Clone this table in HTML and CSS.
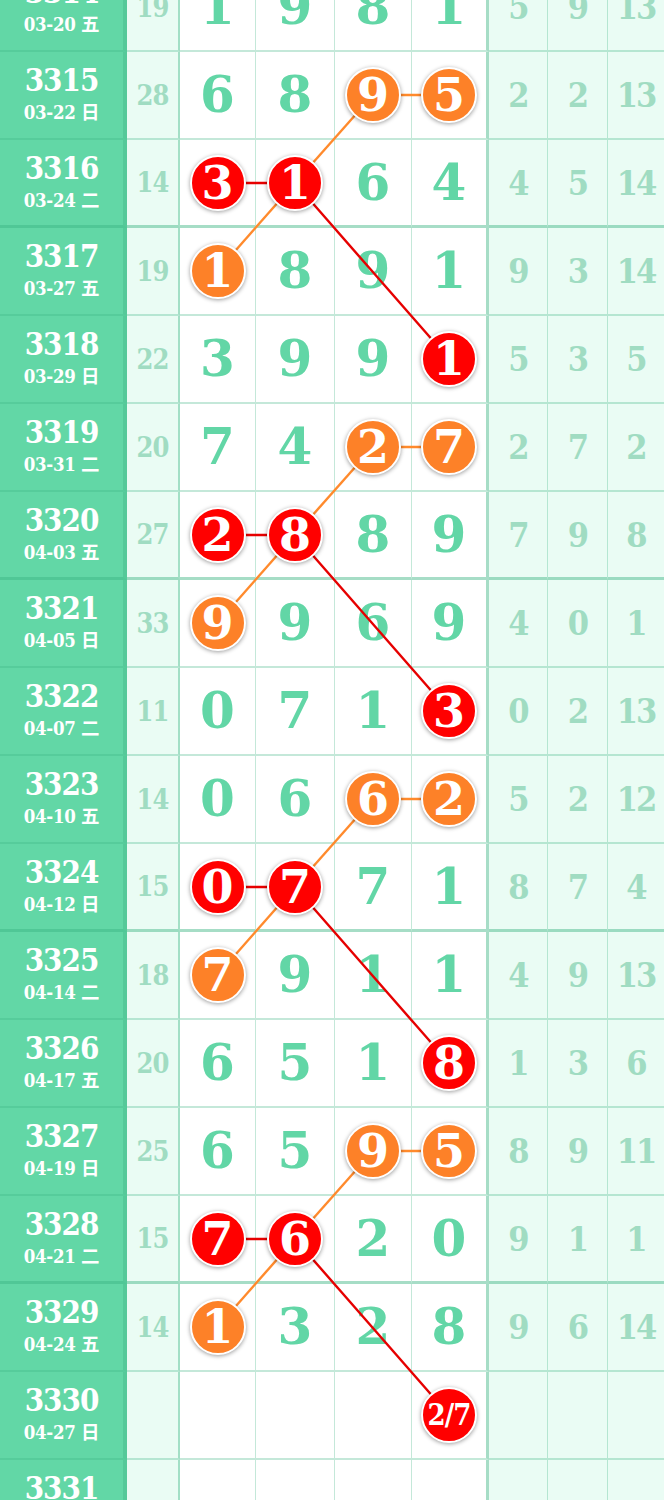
FILE: index.html
```html
<!DOCTYPE html>
<html lang="zh-CN">
<head>
    <meta charset="UTF-8">
    <meta name="viewport" content="width=device-width, initial-scale=1.0">
    <title>走势图</title>
    <link rel="stylesheet" href="styles.css">
</head>
<body>
    <div class="viewport">
        <div class="board" id="board">
            <svg class="links" id="links" width="664" height="1584" xmlns="http://www.w3.org/2000/svg"></svg>
        </div>
    </div>
    <script>
        // issue | date | sum | four digits (o = orange ball, r = red ball) | stats
        const rows = [
            '3314|03-20 五|19|1,9,8,1|5,9,13',
            '3315|03-22 日|28|6,8,o9,o5|2,2,13',
            '3316|03-24 二|14|r3,r1,6,4|4,5,14',
            '3317|03-27 五|19|o1,8,9,1|9,3,14',
            '3318|03-29 日|22|3,9,9,r1|5,3,5',
            '3319|03-31 二|20|7,4,o2,o7|2,7,2',
            '3320|04-03 五|27|r2,r8,8,9|7,9,8',
            '3321|04-05 日|33|o9,9,6,9|4,0,1',
            '3322|04-07 二|11|0,7,1,r3|0,2,13',
            '3323|04-10 五|14|0,6,o6,o2|5,2,12',
            '3324|04-12 日|15|r0,r7,7,1|8,7,4',
            '3325|04-14 二|18|o7,9,1,1|4,9,13',
            '3326|04-17 五|20|6,5,1,r8|1,3,6',
            '3327|04-19 日|25|6,5,o9,o5|8,9,11',
            '3328|04-21 二|15|r7,r6,2,0|9,1,1',
            '3329|04-24 五|14|o1,3,2,8|9,6,14',
            '3330|04-27 日||,,,r2/7|,,',
            '3331|04-29 三||,,,|,,'
        ];

        const board = document.getElementById('board');

        rows.forEach(line => {
            const [no, date, sum, digits, stats] = line.split('|');
            const row = document.createElement('div');
            row.className = 'row' + (no % 4 === 0 ? ' row-end' : '');

            let html = `<div class="cell issue"><span class="no">${no}</span><span class="date">${date}</span></div>`;
            html += `<div class="cell sum">${sum}</div>`;
            digits.split(',').forEach(d => {
                if (d[0] === 'o' || d[0] === 'r') {
                    const color = d[0] === 'o' ? 'ball-orange' : 'ball-red';
                    const small = d.length > 2 ? ' ball-small' : '';
                    html += `<div class="cell num"><span class="ball ${color}${small}">${d.slice(1)}</span></div>`;
                } else {
                    html += `<div class="cell num">${d}</div>`;
                }
            });
            stats.split(',').forEach(s => {
                html += `<div class="cell stat">${s}</div>`;
            });

            row.innerHTML = html;
            board.appendChild(row);
        });

        // ball centres inside the board
        const colX = [217.5, 295, 373, 449];
        const rowY = r => r * 88 + 43;
        const svg = document.getElementById('links');

        function link(r1, c1, r2, c2, color) {
            const l = document.createElementNS('http://www.w3.org/2000/svg', 'line');
            l.setAttribute('x1', colX[c1]);
            l.setAttribute('y1', rowY(r1));
            l.setAttribute('x2', colX[c2]);
            l.setAttribute('y2', rowY(r2));
            l.setAttribute('class', 'link-' + color);
            svg.appendChild(l);
        }

        [1, 5, 9, 13].forEach(b => {
            link(b, 2, b, 3, 'orange');
            link(b, 2, b + 1, 1, 'orange');
            link(b + 1, 0, b + 1, 1, 'red');
            link(b + 1, 1, b + 2, 0, 'orange');
            link(b + 1, 1, b + 3, 3, 'red');
        });
    </script>
</body>
</html>
```

FILE: styles.css
```css
* {
    box-sizing: border-box;
}

body {
    margin: 0;
    padding: 0;
    background-color: #fff;
    font-family: "DejaVu Serif", serif;
}

.viewport {
    width: 664px;
    height: 1500px;
    overflow: hidden;
}

.board {
    position: relative;
    margin-top: -36px;
}

.links {
    position: absolute;
    top: 0;
    left: 0;
    z-index: 1;
    pointer-events: none;
}

.link-orange {
    stroke: #ff8a2c;
    stroke-width: 2.4;
}

.link-red {
    stroke: #e60000;
    stroke-width: 2.4;
}

.row {
    display: grid;
    grid-template-columns: 127px 53px 76px 79px 77px 77px 59px 60px 56px;
    height: 88px;
}

.cell {
    display: flex;
    align-items: center;
    justify-content: center;
    font-weight: bold;
    line-height: 1;
    border-right: 1px solid rgba(60, 180, 130, 0.3);
    border-bottom: 2px solid rgba(60, 180, 130, 0.3);
}

.row-end .cell {
    border-bottom: 3px solid rgba(60, 180, 130, 0.45);
}

.issue {
    flex-direction: column;
    background-color: #62d7a6;
    color: #fff;
    border-right: 4px solid #55c999;
}

.issue .no {
    font-size: 31px;
    font-stretch: condensed;
    letter-spacing: -1px;
    line-height: 30px;
}

.issue .date {
    margin-top: 6px;
    font-size: 18.5px;
    font-stretch: condensed;
    letter-spacing: -0.3px;
    line-height: 24px;
    font-family: "DejaVu Serif", "Noto Sans CJK SC", serif;
}

.sum {
    background-color: #eafcf4;
    color: #a0dcc2;
    font-size: 27px;
    font-stretch: condensed;
    letter-spacing: -1px;
    border-right: 2px solid rgba(60, 180, 130, 0.4);
}

.num {
    color: #62d6a6;
    font-size: 50px;
}

.num:nth-child(6) {
    border-right: 3px solid rgba(60, 180, 130, 0.45);
}

.stat {
    background-color: #eafcf4;
    color: #a0dcc2;
    font-size: 34px;
    font-stretch: condensed;
    letter-spacing: -2px;
}

.stat:last-child {
    border-right: none;
}

.ball {
    position: relative;
    z-index: 2;
    display: flex;
    align-items: center;
    justify-content: center;
    width: 56px;
    height: 56px;
    border: 2px solid #fff;
    border-radius: 50%;
    box-shadow: 0 1px 4px rgba(0, 0, 0, 0.4);
    color: #fff;
    font-size: 46px;
}

.ball-orange {
    background-color: #fd8128;
}

.ball-red {
    background-color: #f00;
}

.ball-small {
    font-size: 29px;
    font-stretch: condensed;
    letter-spacing: -1px;
}
```
